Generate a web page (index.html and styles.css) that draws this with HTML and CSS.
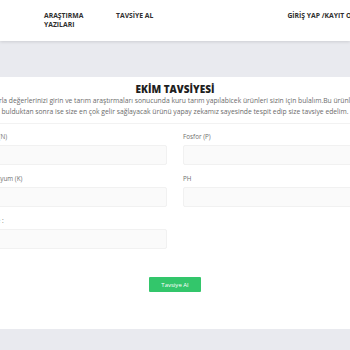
FILE: index.html
```html
<!DOCTYPE html>
<html lang="tr">
<head>
    <meta charset="UTF-8">
    <meta name="viewport" content="width=device-width, initial-scale=1.0">
    <title>Ekim Tavsiyesi</title>
    <link rel="stylesheet" href="styles.css">
</head>
<body>
    <header class="topbar">
        <nav class="menu">
            <a href="#" class="menu-link menu-link-wide">ARAŞTIRMA YAZILARI</a>
            <a href="#" class="menu-link">TAVSİYE AL</a>
            <a href="#" class="menu-link menu-link-login">GİRİŞ YAP /KAYIT OL</a>
        </nav>
    </header>

    <div class="band"></div>

    <section class="recommend">
        <h2 class="recommend-title">EKİM TAVSİYESİ</h2>
        <p class="recommend-text">
            Tarla değerlerinizi girin ve tarım araştırmaları sonucunda kuru tarım yapılabicek ürünleri sizin için bulalım.Bu ürünleri<br>
            bulduktan sonra ise size en çok gelir sağlayacak ürünü yapay zekamız sayesinde tespit edip size tavsiye edelim.
        </p>

        <form class="recommend-form">
            <div class="form-grid">
                <div class="field">
                    <label for="azot">Azot (N)</label>
                    <input type="text" id="azot">
                </div>
                <div class="field">
                    <label for="fosfor">Fosfor (P)</label>
                    <input type="text" id="fosfor">
                </div>
                <div class="field">
                    <label for="potasyum">Potasyum (K)</label>
                    <input type="text" id="potasyum">
                </div>
                <div class="field">
                    <label for="ph">PH</label>
                    <input type="text" id="ph">
                </div>
                <div class="field">
                    <label for="bolge">Bölge :</label>
                    <input type="text" id="bolge">
                </div>
            </div>
            <div class="form-actions">
                <button type="button" class="submit-button">Tavsiye Al</button>
            </div>
        </form>
    </section>

    <div class="band"></div>
</body>
</html>
```

FILE: styles.css
```css
body {
    margin: 0;
    overflow: hidden;
    font-family: "Open Sans", "DejaVu Sans", sans-serif;
    background: #e9eaef;
}

.topbar {
    height: 41px;
    background: white;
    box-shadow: 0 1px 3px rgba(0, 0, 0, 0.12);
    position: relative;
}

.menu {
    display: flex;
    align-items: flex-start;
    padding: 11px 0 0 44px;
    white-space: nowrap;
}

.menu-link {
    flex-shrink: 0;
    color: #2f2f2f;
    font-size: 6.8px;
    font-weight: 700;
    line-height: 9px;
    text-decoration: none;
}

.menu-link-wide {
    width: 56px;
    white-space: normal;
    margin-right: 16px;
}

.menu-link-login {
    margin-left: 134px;
}

.band {
    height: 36px;
}

.recommend {
    background: white;
    height: 252px;
    display: flex;
    flex-direction: column;
    align-items: center;
    padding-top: 6px;
    box-sizing: border-box;
}

.recommend-title {
    margin: 0;
    font-size: 10px;
    line-height: 12px;
    font-weight: 800;
    color: #1f1f1f;
}

.recommend-text {
    margin: 0;
    white-space: nowrap;
    text-align: center;
    font-size: 6.75px;
    line-height: 11px;
    color: #6b6b6b;
}

.recommend-form {
    width: 382px;
    margin-top: 6px;
    padding-top: 8px;
    border-top: 1px solid #f2f2f2;
}

.form-grid {
    display: grid;
    grid-template-columns: 1fr 1fr;
    column-gap: 16px;
    row-gap: 9px;
}

.field label {
    display: block;
    font-size: 6.3px;
    line-height: 10px;
    color: #6f6f6f;
    margin-bottom: 3px;
}

.field input {
    display: block;
    width: 100%;
    height: 20px;
    box-sizing: border-box;
    background: #fafafa;
    border: 1px solid #f1f1f1;
    border-radius: 2px;
}

.form-actions {
    display: flex;
    justify-content: center;
    margin-top: 28px;
}

.submit-button {
    width: 52px;
    height: 15px;
    padding: 0;
    border: none;
    border-radius: 1px;
    background: #33c66b;
    color: white;
    font-family: "Open Sans", sans-serif;
    font-size: 6px;
}
```
